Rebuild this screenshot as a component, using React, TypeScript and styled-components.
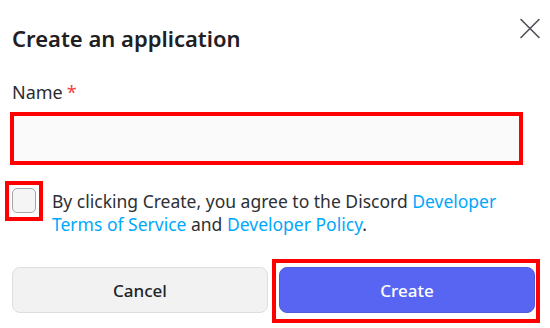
import React, { ReactElement } from "react";
import styled, { createGlobalStyle } from "styled-components";

const GlobalStyle = createGlobalStyle`
  html, body {
    margin: 0;
    padding: 0;
    background: #ffffff;
  }
  body {
    font-family: "Noto Sans", "Open Sans", sans-serif;
    color: #313338;
  }
`;

const Modal = styled.div`
  width: 550px;
  height: 328px;
  box-sizing: border-box;
  padding: 23px 15px 0 12px;
  background: #ffffff;
  overflow: hidden;
`;

const Header = styled.div`
  display: flex;
  flex-direction: row;
  justify-content: space-between;
  align-items: flex-start;

  > h2 {
    margin: 0;
    font-size: 22px;
    line-height: 30px;
    font-weight: 600;
    color: #1f2023;
  }
`;

const CloseButton = styled.button`
  display: flex;
  align-items: center;
  justify-content: center;
  width: 24px;
  height: 24px;
  margin: -6px -7px 0 0;
  padding: 0;
  border: none;
  background: transparent;
  color: #4e5058;
  cursor: pointer;
`;

const Label = styled.label`
  display: block;
  margin-top: 28px;
  font-size: 18px;
  line-height: 23px;
  font-weight: 400;
  color: #2b2c30;

  > span {
    margin-left: 4px;
    color: #f23f43;
  }
`;

// red annotation frame drawn over the highlighted control
const Highlighted = styled.div<{ $inset: string }>`
  position: relative;

  &::after {
    content: "";
    position: absolute;
    inset: ${({ $inset }) => $inset};
    border: 4px solid #ff0000;
    pointer-events: none;
  }
`;

const InputWrap = styled(Highlighted)`
  margin-top: 10px;
  width: 509px;
`;

const TextInput = styled.input`
  display: block;
  box-sizing: border-box;
  width: 100%;
  height: 49px;
  border: 1px solid #dcdcdf;
  border-radius: 4px;
  background: #fafafa;
  outline: none;
`;

const AgreeRow = styled.div`
  display: flex;
  flex-direction: row;
  align-items: flex-start;
  gap: 16px;
  margin-top: 27px;
`;

const CheckWrap = styled(Highlighted)`
  flex-shrink: 0;
  width: 24px;
  height: 25px;
  margin-top: -2px;
`;

const CheckBox = styled.div`
  box-sizing: border-box;
  width: 100%;
  height: 100%;
  border: 1.5px solid #a6a6ab;
  border-radius: 5px;
  background: #f5f5f6;
`;

const AgreeText = styled.p`
  margin: 0;
  font-size: 17.5px;
  line-height: 23px;
  color: #2e2f34;

  > a {
    color: #00a8fc;
    text-decoration: none;
  }
`;

const Actions = styled.div`
  display: grid;
  grid-template-columns: 256px 256px;
  column-gap: 11px;
  margin-top: 31px;
`;

const Button = styled.button<{ $primary?: boolean }>`
  width: 100%;
  height: 46px;
  box-sizing: border-box;
  border-radius: 8px;
  border: 1px solid ${({ $primary }) => ($primary ? "#4f5bd8" : "#dedee0")};
  background: ${({ $primary }) => ($primary ? "#5865f2" : "#f2f2f3")};
  color: ${({ $primary }) => ($primary ? "#ffffff" : "#232428")};
  font-family: inherit;
  font-size: 17px;
  font-weight: 500;
  cursor: pointer;
`;

export default function App(): ReactElement {
  return (
    <>
      <GlobalStyle />
      <Modal>
        <Header>
          <h2>Create an application</h2>
          <CloseButton aria-label="Close">
            <svg width="24" height="24" viewBox="0 0 24 24" fill="none">
              <path
                d="M3 2.5L21 20.5M21 2.5L3 20.5"
                stroke="currentColor"
                strokeWidth="1.6"
                strokeLinecap="round"
              />
            </svg>
          </CloseButton>
        </Header>

        <Label>
          Name<span>*</span>
        </Label>
        <InputWrap $inset="-2px">
          <TextInput type="text" />
        </InputWrap>

        <AgreeRow>
          <CheckWrap $inset="-7px -7px -8px -7px">
            <CheckBox />
          </CheckWrap>
          <AgreeText>
            By clicking Create, you agree to the Discord <a href="#">Developer Terms of Service</a> and{" "}
            <a href="#">Developer Policy</a>.
          </AgreeText>
        </AgreeRow>

        <Actions>
          <Button>Cancel</Button>
          <Highlighted $inset="-8px -5px -10px -7px">
            <Button $primary>Create</Button>
          </Highlighted>
        </Actions>
      </Modal>
    </>
  );
}
